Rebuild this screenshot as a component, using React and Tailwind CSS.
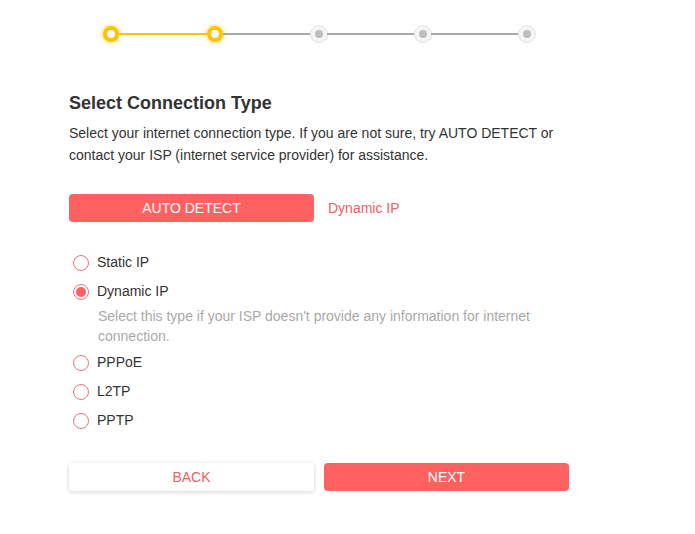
import React from "react";

function DoneStep() {
  return (
    <div className="w-4 h-4 flex items-center justify-center shrink-0">
      <div className="w-4 h-4 rounded-full border-[4px] border-[#ffc400] bg-white shadow-[0_0_4px_1px_rgba(255,196,0,0.55)] shrink-0" />
    </div>
  );
}

function TodoStep() {
  return (
    <div className="w-4 h-4 flex items-center justify-center shrink-0">
      <div className="w-[18px] h-[18px] rounded-full bg-[#f5f5f5] border border-[#e4e4e4] flex items-center justify-center shrink-0">
        <div className="w-[8px] h-[8px] rounded-full bg-[#bdbdbd]" />
      </div>
    </div>
  );
}

function Line({ active }) {
  return <div className={active ? "w-[88px] h-[2px] bg-[#ffc400]" : "w-[88px] h-[2px] bg-[#a8a8a8]"} />;
}

function Radio({ label, checked }) {
  return (
    <div className="h-[29px] flex items-center">
      <div className="ml-1 w-4 h-4 rounded-full border border-[#e8737d] flex items-center justify-center bg-white">
        {checked && <div className="w-[10px] h-[10px] rounded-full bg-[#ff5f5f]" />}
      </div>
      <span className="ml-2 text-[14px] text-[#333]">{label}</span>
    </div>
  );
}

export default function App() {
  return (
    <div className="w-[695px] h-[534px] bg-white pt-[26px] font-['Liberation_Sans',Arial,sans-serif]">
      <div className="flex items-center ml-[103px]">
        <DoneStep />
        <Line active />
        <DoneStep />
        <Line />
        <TodoStep />
        <Line />
        <TodoStep />
        <Line />
        <TodoStep />
      </div>

      <div className="ml-[69px] w-[500px]">
        <h1 className="mt-[49px] text-[18px] leading-[24px] font-bold text-[#333]">Select Connection Type</h1>
        <p className="mt-[7px] text-[14px] leading-[22px] text-[#333]">
          Select your internet connection type. If you are not sure, try AUTO DETECT or contact your ISP (internet service provider) for assistance.
        </p>

        <div className="mt-[28px] flex items-center">
          <button className="w-[245px] h-[28px] rounded-[4px] bg-[#ff6060] text-white text-[14px] leading-[28px]">AUTO DETECT</button>
          <span className="ml-[14px] text-[14px] text-[#f0605f]">Dynamic IP</span>
        </div>

        <div className="mt-[26px]">
          <Radio label="Static IP" />
          <Radio label="Dynamic IP" checked />
          <p className="pl-[29px] pr-[30px] text-[14px] leading-[20px] text-[#a9a9a9]">
            Select this type if your ISP doesn't provide any information for internet connection.
          </p>
          <div className="mt-[2px]">
            <Radio label="PPPoE" />
            <Radio label="L2TP" />
            <Radio label="PPTP" />
          </div>
        </div>

        <div className="mt-[28px] flex gap-[10px]">
          <button className="w-[245px] h-[28px] rounded-[4px] bg-white shadow-[0_1px_4px_rgba(0,0,0,0.18)] text-[#f0605f] text-[14px]">BACK</button>
          <button className="w-[245px] h-[28px] rounded-[4px] bg-[#ff6060] text-white text-[14px]">NEXT</button>
        </div>
      </div>
    </div>
  );
}
